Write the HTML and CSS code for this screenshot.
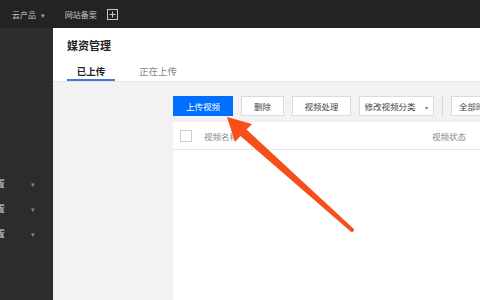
FILE: index.html
```html
<!DOCTYPE html>
<html lang="zh-CN">
<head>
  <meta charset="UTF-8" />
  <title>媒资管理</title>
  <link rel="stylesheet" href="styles.css">
</head>
<body>
  <div class="topbar">
    <span class="top-link">云产品 <span class="caret">▾</span></span>
    <span class="top-link">网站备案</span>
    <svg class="plus-box" width="11" height="11" viewBox="0 0 11 11">
      <rect x="0.5" y="0.5" width="10" height="10" fill="none" stroke="#c8c8c8" stroke-width="1"/>
      <path d="M5.5 2.5v6M2.5 5.5h6" stroke="#c8c8c8" stroke-width="1"/>
    </svg>
  </div>

  <div class="layout">
    <nav class="sidebar">
      <div class="side-item"><span class="side-text">设置</span><span class="side-caret">▾</span></div>
      <div class="side-item"><span class="side-text">设置</span><span class="side-caret">▾</span></div>
      <div class="side-item"><span class="side-text">设置</span><span class="side-caret">▾</span></div>
    </nav>

    <main class="main">
      <header class="page-head">
        <h1>媒资管理</h1>
        <div class="tabs">
          <span class="tab active">已上传</span>
          <span class="tab">正在上传</span>
        </div>
      </header>

      <section class="content">
        <div class="toolbar">
          <button class="btn btn-primary">上传视频</button>
          <button class="btn btn-del">删除</button>
          <button class="btn btn-proc">视频处理</button>
          <button class="btn btn-cat">修改视频分类 <span class="btn-caret">▾</span></button>
          <span class="divider"></span>
          <button class="btn btn-time">全部时间</button>
        </div>

        <div class="table">
          <div class="table-head">
            <span class="checkbox"></span>
            <span class="col-name">视频名称</span>
            <span class="col-status">视频状态</span>
          </div>
          <div class="table-body"></div>
        </div>
      </section>
    </main>
  </div>

  <svg class="arrow" width="480" height="300" viewBox="0 0 480 300">
    <polygon fill="#f64f1c" points="227,117 252,124 246.5,129.5 353.3,228.5 350.7,231.5 240.4,136.1 235,142"/>
    <circle cx="352" cy="230" r="2" fill="#f64f1c"/>
  </svg>
</body>
</html>
```

FILE: styles.css
```css
html, body {
  margin: 0;
  padding: 0;
}

body {
  width: 480px;
  height: 300px;
  overflow: hidden;
  position: relative;
  font-family: "Noto Sans CJK SC", "Noto Sans", sans-serif;
  background-color: #2c2c2c;
  display: flex;
  flex-direction: column;
}

.topbar {
  height: 28px;
  flex-shrink: 0;
  background-color: #232323;
  display: flex;
  align-items: center;
  padding-left: 12px;
  gap: 20px;
}

.top-link {
  color: #c4c4c4;
  font-size: 8px;
  white-space: nowrap;
}

.caret {
  font-size: 7px;
  margin-left: 3px;
  color: #a8a8a8;
}

.plus-box {
  margin-left: -10px;
}

.layout {
  flex: 1;
  display: flex;
  min-height: 0;
}

.sidebar {
  width: 53px;
  flex-shrink: 0;
  background-color: #2c2c2c;
  padding-top: 143px;
  overflow: hidden;
}

.side-item {
  height: 25px;
  display: flex;
  align-items: center;
  margin-left: -13px;
}

.side-text {
  color: #cfcfcf;
  font-size: 9px;
  width: 44px;
  white-space: nowrap;
}

.side-caret {
  color: #8a8a8a;
  font-size: 7px;
}

.main {
  flex: 1;
  background-color: #f2f2f2;
  overflow: hidden;
  display: flex;
  flex-direction: column;
}

.page-head {
  background-color: #fff;
  height: 53px;
  border-bottom: 1px solid #e4e4e4;
  padding-left: 14px;
  display: flex;
  flex-direction: column;
}

.page-head h1 {
  margin: 10px 0 0;
  font-size: 11px;
  font-weight: bold;
  color: #222;
  line-height: 14px;
}

.tabs {
  display: flex;
  gap: 24px;
  margin-top: auto;
}

.tab {
  font-size: 9.5px;
  color: #888;
  line-height: 14px;
  padding-bottom: 1px;
  border-bottom: 2px solid transparent;
}

.tab.active {
  color: #222;
  font-weight: bold;
  width: 48px;
  text-align: center;
  border-bottom-color: #3a7be0;
}

.content {
  padding: 14px 0 0 120px;
  flex: 1;
  display: flex;
  flex-direction: column;
}

.toolbar {
  display: flex;
  align-items: center;
  gap: 8px;
  height: 20px;
  white-space: nowrap;
}

.btn {
  height: 20px;
  padding: 0;
  border: 1px solid #dcdcdc;
  background-color: #fff;
  color: #444;
  font-family: "Noto Sans CJK SC", "Noto Sans", sans-serif;
  font-size: 8.5px;
  flex-shrink: 0;
}

.btn-primary {
  width: 60px;
  background-color: #006eff;
  border-color: #006eff;
  color: #fff;
}

.btn-del {
  width: 43px;
}

.btn-proc {
  width: 59px;
}

.btn-cat {
  width: 75px;
}

.btn-caret {
  font-size: 6px;
  margin-left: 8px;
  color: #777;
}

.divider {
  width: 1px;
  height: 22px;
  background-color: #d6d6d6;
  flex-shrink: 0;
}

.btn-time {
  width: 60px;
  text-align: left;
  padding-left: 7px;
}

.table {
  margin-top: 6px;
  background-color: #fff;
  width: 360px;
  flex: 1;
}

.table-head {
  height: 27px;
  border-bottom: 1px solid #e6e6e6;
  display: flex;
  align-items: center;
  padding-left: 7px;
}

.checkbox {
  width: 10px;
  height: 10px;
  border: 1px solid #cfcfcf;
  flex-shrink: 0;
}

.col-name {
  margin-left: 12px;
  width: 228px;
  font-size: 8.5px;
  color: #888;
}

.col-status {
  font-size: 8.5px;
  color: #888;
}

.arrow {
  position: absolute;
  top: 0;
  left: 0;
  pointer-events: none;
}
```
